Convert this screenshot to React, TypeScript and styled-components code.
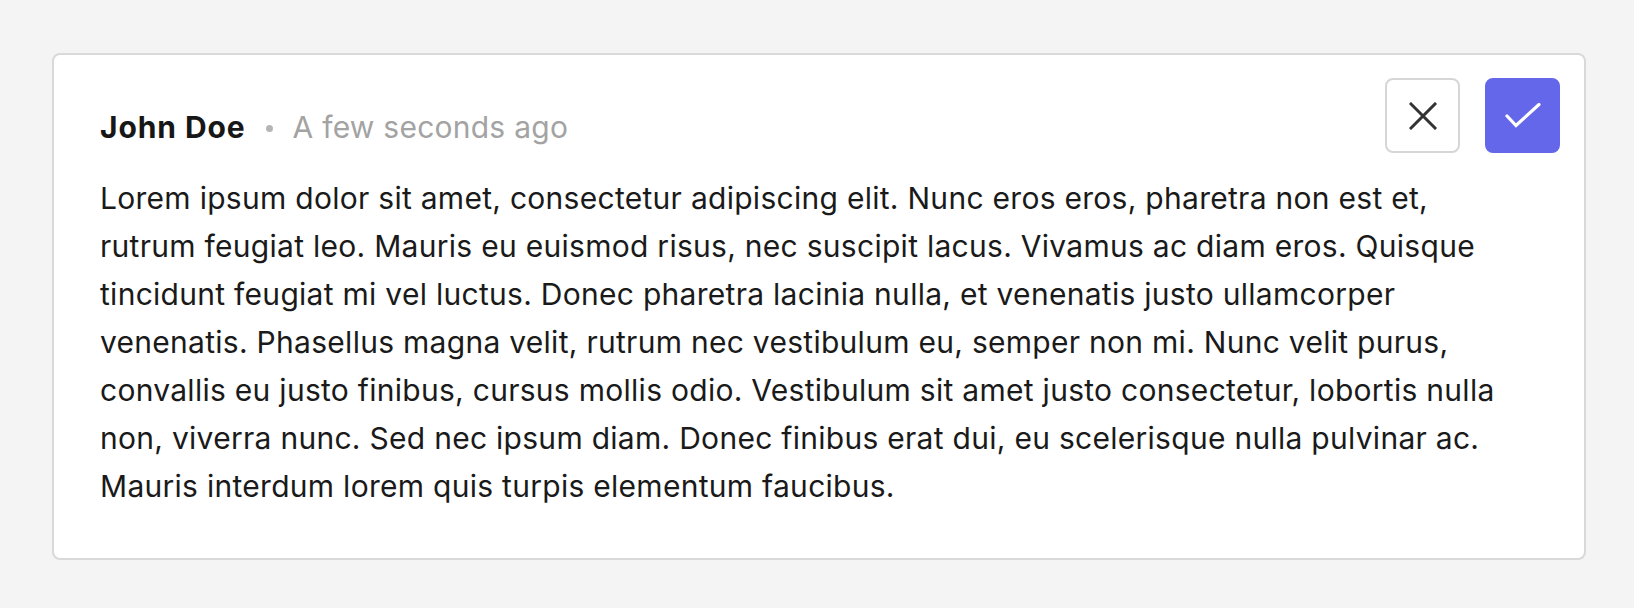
import React from "react";
import styled, { createGlobalStyle } from "styled-components";

const GlobalStyle = createGlobalStyle`
  html, body {
    margin: 0;
    padding: 0;
    background: #f4f4f4;
  }
  body {
    font-family: Inter, "Noto Sans", "Liberation Sans", sans-serif;
    -webkit-font-smoothing: antialiased;
  }
`;

const Page = styled.div`
  padding: 53px 48px 50px 52px;
`;

const Card = styled.article`
  background: #ffffff;
  border: 2px solid #d9d9d9;
  border-radius: 8px;
  padding: 23px 24px 48px 46px;
`;

const Header = styled.header`
  display: flex;
  justify-content: space-between;
  align-items: flex-start;
`;

const Meta = styled.div`
  display: flex;
  align-items: center;
  margin-top: 25px;
  font-size: 30px;
  line-height: 48px;
`;

const Author = styled.span`
  font-weight: 700;
  color: #171717;
  letter-spacing: 0.9px;
`;

const Dot = styled.span`
  width: 7px;
  height: 7px;
  border-radius: 50%;
  background: #b5b5b5;
  margin: 2px 20px 0 20px;
`;

const Time = styled.span`
  color: #a3a3a3;
  letter-spacing: 0.25px;
`;

const Actions = styled.div`
  display: flex;
  gap: 25px;
`;

const IconButton = styled.button<{ $primary?: boolean }>`
  width: 75px;
  height: 75px;
  display: flex;
  align-items: center;
  justify-content: center;
  padding: 0;
  border-radius: 8px;
  cursor: pointer;
  border: 2px solid ${(p) => (p.$primary ? "#6467ea" : "#d6d6d6")};
  background: ${(p) => (p.$primary ? "#6467ea" : "#ffffff")};
  color: ${(p) => (p.$primary ? "#ffffff" : "#333333")};
`;

const Body = styled.p`
  margin: 21px 46px 0 0;
  font-size: 30px;
  line-height: 48px;
  letter-spacing: 0.28px;
  color: #1a1a1a;
`;

const CloseIcon = () => (
  <svg width="28" height="28" viewBox="0 0 28 28" fill="none" stroke="currentColor" strokeWidth="3" strokeLinecap="square">
    <path d="M2 2 L26 26 M26 2 L2 26" />
  </svg>
);

const CheckIcon = () => (
  <svg width="36" height="26" viewBox="0 0 36 26" fill="none" stroke="currentColor" strokeWidth="3.2" strokeLinecap="round" strokeLinejoin="miter">
    <path d="M2 13 L11 22.5 L34 1.5" />
  </svg>
);

export default function App() {
  return (
    <>
      <GlobalStyle />
      <Page>
        <Card>
          <Header>
            <Meta>
              <Author>John Doe</Author>
              <Dot />
              <Time>A few seconds ago</Time>
            </Meta>
            <Actions>
              <IconButton aria-label="Cancel">
                <CloseIcon />
              </IconButton>
              <IconButton $primary aria-label="Confirm">
                <CheckIcon />
              </IconButton>
            </Actions>
          </Header>
          <Body>
            Lorem ipsum dolor sit amet, consectetur adipiscing elit. Nunc eros eros, pharetra non est et, rutrum feugiat leo. Mauris eu euismod risus, nec suscipit lacus. Vivamus ac diam eros. Quisque tincidunt feugiat mi vel luctus. Donec pharetra lacinia nulla, et venenatis justo ullamcorper venenatis. Phasellus magna velit, rutrum nec vestibulum eu, semper non mi. Nunc velit purus, convallis eu justo finibus, cursus mollis odio. Vestibulum sit amet justo consectetur, lobortis nulla non, viverra nunc. Sed nec ipsum diam. Donec finibus erat dui, eu scelerisque nulla pulvinar ac. Mauris interdum lorem quis turpis elementum faucibus.
          </Body>
        </Card>
      </Page>
    </>
  );
}
